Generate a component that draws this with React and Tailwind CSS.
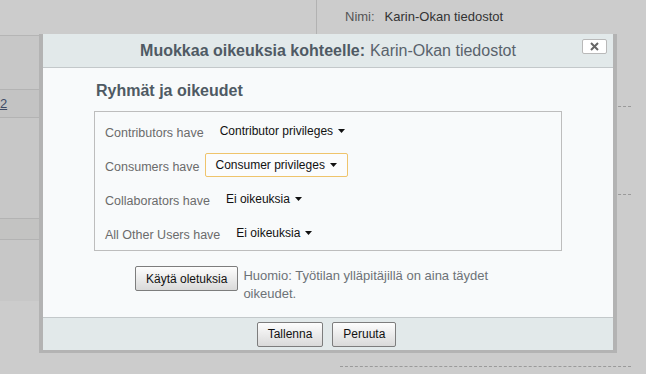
import React from "react";

const rows = [
  { label: "Contributors have", value: "Contributor privileges" },
  { label: "Consumers have", value: "Consumer privileges", focused: true },
  { label: "Collaborators have", value: "Ei oikeuksia" },
  { label: "All Other Users have", value: "Ei oikeuksia" },
];

const Caret = () => (
  <svg width="7" height="4" viewBox="0 0 7 4" className="ml-[5px] shrink-0">
    <path d="M0 0h7L3.5 4z" fill="#111" />
  </svg>
);

function Button({ children }) {
  return (
    <button className="h-[25px] px-[10px] rounded-[2px] border border-[#7d7d7d] bg-linear-to-b from-[#fdfdfd] to-[#dadada] text-[12px] leading-none text-[#111]">
      {children}
    </button>
  );
}

function PermissionRow({ label, value, focused }) {
  return (
    <div className="flex h-[34px] items-center">
      <span className="pt-[5px] text-[12.5px] text-[#6b6b6b]">{label}</span>
      <div
        className={
          focused
            ? "ml-[5px] flex h-[24px] items-center rounded-[2px] border border-[#efc46c] bg-[#fbfcfd] px-[10px] text-[12px] text-[#111]"
            : "ml-[5px] flex h-[24px] items-center border border-transparent px-[10px] text-[12px] text-[#111]"
        }
      >
        {value}
        <Caret />
      </div>
    </div>
  );
}

export default function App() {
  return (
    <div className="relative h-[374px] w-[646px] overflow-hidden bg-[#cccccc] font-['Liberation_Sans',Arial,sans-serif]">
      {/* page behind the mask */}
      <div className="flex h-full">
        <div className="flex w-[317px] flex-col">
          <div className="h-[35px] border-r border-[#b2b2b2]" />
          <div className="h-[266px] border-t border-[#b5b5b5] bg-[#c7c7c7] pt-[53px]">
            <div className="flex h-[29px] items-center border-y border-[#b3b3b3] bg-[#c3c3c3] text-[13px] text-[#3f4b66]">
              <span className="underline">2</span>
            </div>
            <div className="h-[100px]" />
            <div className="h-[22px] border-y border-[#b3b3b3] bg-[#c3c3c2]" />
          </div>
        </div>
        <div className="flex-1">
          <div className="flex h-[35px] items-center pb-[1px] pl-[28px] text-[13px]">
            <span className="text-[#555]">Nimi:</span>
            <span className="ml-[10px] text-[#333]">Karin-Okan tiedostot</span>
          </div>
          <div className="ml-[23px] mr-[15px]">
            <div className="h-[72px] border-b border-dashed border-[#9a9a9a]" />
            <div className="h-[88px] border-b border-dashed border-[#9a9a9a]" />
            <div className="h-[172px] border-b border-dashed border-[#9a9a9a]" />
          </div>
        </div>
      </div>

      {/* dialog */}
      <div className="absolute left-[39px] top-[34px] w-[578px] border-x-4 border-b-[3px] border-[#b3b3b3]">
        <div className="relative flex h-[34px] items-center justify-center border-b border-[#c3c8ca] bg-[#e2e9ea] text-[16px] text-[#4f5a64]">
          <span className="font-bold">Muokkaa oikeuksia kohteelle:</span>
          <span className="ml-[5px] text-[#59636c]">Karin-Okan tiedostot</span>
          <button className="absolute right-[6px] top-[5px] flex h-[15px] w-[25px] items-center justify-center rounded-[2px] border border-[#b9b9b9] bg-white">
            <svg width="9" height="9" viewBox="0 0 9 9">
              <path d="M1 1l7 7M8 1l-7 7" stroke="#666" strokeWidth="2" />
            </svg>
          </button>
        </div>

        <div className="h-[249px] bg-[#f8fafb] px-[51px] pt-[14px]">
          <h2 className="pl-[2px] text-[16px] font-bold leading-[18px] text-[#4f5a64]">
            Ryhmät ja oikeudet
          </h2>
          <div className="mt-[11px] border border-[#bdbdbd] pl-[10px] pt-[2px]">
            {rows.map((r) => (
              <PermissionRow key={r.label} {...r} />
            ))}
          </div>
          <div className="mt-[15px] flex items-start pl-[41px]">
            <Button>Käytä oletuksia</Button>
            <p className="ml-[5px] mt-[1px] w-[262px] text-[13px] leading-[18px] text-[#6d7277]">
              Huomio: Työtilan ylläpitäjillä on aina täydet oikeudet.
            </p>
          </div>
        </div>

        <div className="flex h-[33px] items-center justify-center gap-[9px] border-t border-[#c3c8ca] bg-[#e2e9ea] pr-[3px]">
          <Button>Tallenna</Button>
          <Button>Peruuta</Button>
        </div>
      </div>
    </div>
  );
}
